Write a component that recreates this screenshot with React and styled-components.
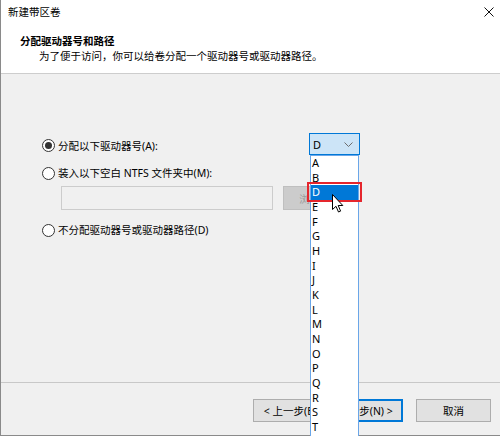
import React from "react";
import styled, { createGlobalStyle } from "styled-components";

const GlobalStyle = createGlobalStyle`
  html, body {
    margin: 0;
    padding: 0;
    overflow: hidden;
    background: #ffffff;
  }
  body {
    font-family: "Noto Sans", "Noto Sans CJK SC", sans-serif;
    font-size: 10.5px;
    color: #000000;
  }
`;

const LETTERS = ["A", "B", "D", "E", "F", "G", "H", "I", "J", "K", "L", "M", "N", "O", "P", "Q", "R", "S", "T"];

const Window = styled.div`
  width: 500px;
  height: 436px;
  box-sizing: border-box;
  border-left: 1px solid #8a8a8a;
  border-bottom: 1px solid #8a8a8a;
  background: #f0f0f0;
  display: flex;
  flex-direction: column;
`;

const TitleBar = styled.div`
  height: 24px;
  flex: none;
  background: #ffffff;
  display: flex;
  align-items: center;
  justify-content: space-between;
  padding: 0 6px 0 7px;
  span {
    line-height: 14px;
  }
`;

const Header = styled.div`
  height: 50px;
  flex: none;
  box-sizing: border-box;
  background: #ffffff;
  border-bottom: 1px solid #cdcdcd;
  padding-top: 10px;
  .title {
    padding-left: 19px;
    font-weight: bold;
    line-height: 14px;
  }
  .sub {
    padding-left: 38px;
    margin-top: 1px;
    line-height: 14px;
  }
`;

const Content = styled.div`
  height: 308px;
  flex: none;
  box-sizing: border-box;
  padding: 59px 0 0 41px;
`;

const Row = styled.div`
  display: flex;
  align-items: center;
  height: ${(p) => p.h || 16}px;
  margin-top: ${(p) => p.mt || 0}px;
  width: ${(p) => (p.w ? p.w + "px" : "auto")};
  justify-content: ${(p) => (p.w ? "space-between" : "flex-start")};
`;

const Option = styled.label`
  display: flex;
  align-items: center;
  gap: 3px;
  margin-top: ${(p) => p.offset || 0}px;
  line-height: 16px;
  white-space: nowrap;
`;

const Radio = styled.span`
  width: 13px;
  height: 13px;
  box-sizing: border-box;
  border: 1px solid #333333;
  border-radius: 50%;
  background: #ffffff;
  display: flex;
  align-items: center;
  justify-content: center;
  &::after {
    content: "";
    width: 7px;
    height: 7px;
    border-radius: 50%;
    background: ${(p) => (p.checked ? "#333333" : "transparent")};
  }
`;

const PathRow = styled.div`
  display: flex;
  gap: 10px;
  margin-top: 5px;
  padding-left: 19px;
`;

const PathInput = styled.div`
  width: 212px;
  height: 24px;
  box-sizing: border-box;
  border: 1px solid #cccccc;
  background: #f0f0f0;
`;

const DisabledButton = styled.div`
  width: 75px;
  height: 24px;
  box-sizing: border-box;
  border: 1px solid #bfbfbf;
  background: #cccccc;
  color: #9a9a9a;
  display: flex;
  align-items: center;
  justify-content: center;
`;

const ComboWrap = styled.div`
  position: relative;
  width: 51px;
  height: 22px;
`;

const Combo = styled.div`
  height: 22px;
  box-sizing: border-box;
  border: 1px solid #0078d7;
  background: #cce4f7;
  display: flex;
  align-items: center;
  justify-content: space-between;
  padding: 0 6px 0 3px;
  font-size: 11px;
`;

const DropList = styled.div`
  position: absolute;
  z-index: 10;
  top: 22px;
  left: 1px;
  width: 49px;
  height: 290px;
  box-sizing: border-box;
  border: 1px solid #6aa6e8;
  background: #ffffff;
  overflow: hidden;
`;

const Item = styled.div`
  height: 14.67px;
  line-height: 14.67px;
  padding-left: 1px;
  font-size: 11px;
  background: ${(p) => (p.selected ? "#0078d7" : "transparent")};
  color: ${(p) => (p.selected ? "#ffffff" : "#000000")};
`;

const Highlight = styled.div`
  position: absolute;
  z-index: 11;
  left: -2px;
  top: 49px;
  width: 55px;
  height: 20px;
  box-sizing: border-box;
  border: 2px solid #e5262d;
`;

const Pointer = styled.svg`
  position: absolute;
  z-index: 12;
  left: 23px;
  top: 61px;
`;

const Footer = styled.div`
  height: 53px;
  flex: none;
  box-sizing: border-box;
  border-top: 1px solid #c8c8c8;
  padding: 16px 9px 0 0;
  display: flex;
  justify-content: flex-end;
  align-items: flex-start;
`;

const Button = styled.div`
  width: 75px;
  height: 23px;
  box-sizing: border-box;
  border: 1px solid ${(p) => (p.primary ? "#0078d7" : "#adadad")};
  box-shadow: ${(p) => (p.primary ? "inset 0 0 0 1px #0078d7" : "none")};
  background: #e1e1e1;
  display: flex;
  align-items: center;
  justify-content: center;
  margin-left: ${(p) => p.gap || 0}px;
  white-space: nowrap;
`;

function App() {
  return (
    <Window>
      <GlobalStyle />
      <TitleBar>
        <span>新建带区卷</span>
        <svg width="10" height="10" viewBox="0 0 10 10">
          <path d="M0.5 0.5 L9.5 9.5 M9.5 0.5 L0.5 9.5" stroke="#111" strokeWidth="1" fill="none" />
        </svg>
      </TitleBar>
      <Header>
        <div className="title">分配驱动器号和路径</div>
        <div className="sub">为了便于访问，你可以给卷分配一个驱动器号或驱动器路径。</div>
      </Header>
      <Content>
        <Row h={22} w={318}>
          <Option offset={3}>
            <Radio checked />
            分配以下驱动器号(A):
          </Option>
          <ComboWrap>
            <Combo>
              <span>D</span>
              <svg width="9" height="5" viewBox="0 0 9 5">
                <path d="M0.5 0.5 L4.5 4.5 L8.5 0.5" stroke="#6d6d6d" strokeWidth="1" fill="none" />
              </svg>
            </Combo>
            <DropList>
              {LETTERS.map((l) => (
                <Item key={l} selected={l === "D"}>
                  {l}
                </Item>
              ))}
            </DropList>
            <Highlight />
            <Pointer width="12" height="19" viewBox="0 0 12 19">
              <path
                d="M0.5 0.5 L0.5 15.5 L4 12.3 L6.5 18 L8.6 17.1 L6.2 11.5 L10.8 11.5 Z"
                fill="#ffffff"
                stroke="#000000"
                strokeWidth="1"
                strokeLinejoin="round"
              />
            </Pointer>
          </ComboWrap>
        </Row>
        <Row mt={10}>
          <Option>
            <Radio />
            装入以下空白 NTFS 文件夹中(M):
          </Option>
        </Row>
        <PathRow>
          <PathInput />
          <DisabledButton>浏览(R)...</DisabledButton>
        </PathRow>
        <Row mt={12}>
          <Option>
            <Radio />
            不分配驱动器号或驱动器路径(D)
          </Option>
        </Row>
      </Content>
      <Footer>
        <Button>&lt; 上一步(B)</Button>
        <Button primary>下一步(N) &gt;</Button>
        <Button gap={13}>取消</Button>
      </Footer>
    </Window>
  );
}

export default App;
